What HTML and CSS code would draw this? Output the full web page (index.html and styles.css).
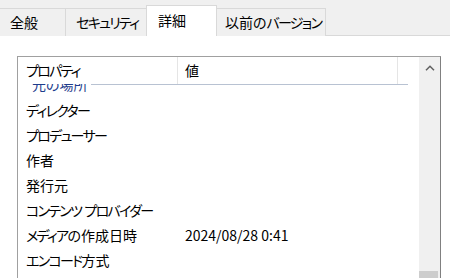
FILE: index.html
```html
<!DOCTYPE html>
<html lang="ja">
<head>
<meta charset="utf-8">
<link rel="stylesheet" href="styles.css">
</head>
<body>
<div class="tabstrip">
  <div class="tab t1">全般</div>
  <div class="tab t2"><span class="k">セキュリティ</span></div>
  <div class="tab t3 active">詳細</div>
  <div class="tab t4">以前の<span class="k">バージョン</span></div>
</div>
<div class="page">
  <div class="listbox">
    <div class="main">
      <div class="header">
        <div class="hcell c1"><span class="k">プロパティ</span></div>
        <div class="hcell c2">値</div>
        <div class="hcell c3"></div>
      </div>
      <div class="body">
        <div class="content">
          <div class="group"><span class="gtext">元の場所</span><span class="gline"></span></div>
          <div class="row"><div class="cell c1"><span class="k">ディレクター</span></div><div class="cell c2"></div></div>
          <div class="row"><div class="cell c1"><span class="k">プロデューサー</span></div><div class="cell c2"></div></div>
          <div class="row"><div class="cell c1">作者</div><div class="cell c2"></div></div>
          <div class="row"><div class="cell c1">発行元</div><div class="cell c2"></div></div>
          <div class="row"><div class="cell c1"><span class="k">コンテンツ</span>&nbsp;<span class="k">プロバイダー</span></div><div class="cell c2"></div></div>
          <div class="row"><div class="cell c1"><span class="k">メディア</span>の作成日時</div><div class="cell c2">2024/08/28 0:41</div></div>
          <div class="row"><div class="cell c1"><span class="k">エンコード</span>方式</div><div class="cell c2"></div></div>
        </div>
      </div>
    </div>
    <div class="scrollbar">
      <div class="sb-up">
        <svg width="10" height="6" viewBox="0 0 10 6"><path d="M1 5.2 L5 1.2 L9 5.2" fill="none" stroke="#606060" stroke-width="1.5"/></svg>
      </div>
      <div class="sb-track"></div>
      <div class="sb-thumb"></div>
    </div>
  </div>
</div>
</body>
</html>
```
FILE: styles.css
```css
html, body {
  margin: 0;
  padding: 0;
  background: #ffffff;
  overflow: hidden;
}
body {
  width: 450px;
  height: 278px;
  font-family: "Noto Sans CJK JP", "Noto Sans", sans-serif;
  font-size: 14px;
  font-feature-settings: "palt";
  color: #000;
}
.k {
  letter-spacing: -1.7px;
}
.tabstrip {
  height: 35px;
  background: #f0f0f0;
  border-bottom: 1px solid #d9d9d9;
  display: flex;
  align-items: flex-end;
}
.tab {
  box-sizing: border-box;
  height: 28px;
  margin-bottom: -1px;
  border: 1px solid #d9d9d9;
  border-bottom: none;
  margin-left: -1px;
  padding-left: 10px;
  line-height: 26px;
  background: #f0f0f0;
  white-space: nowrap;
}
.t1 { width: 67px; }
.t2 { width: 82px; }
.t3 { width: 71px; }
.t4 { width: 110px; padding-left: 8px; }
.tab.active {
  height: 31px;
  background: #ffffff;
  position: relative;
  z-index: 1;
  padding-left: 11px;
  line-height: 29px;
  margin-bottom: -1px;
}
.page {
  padding: 20px 0 0 17px;
}
.listbox {
  box-sizing: border-box;
  width: 424px;
  height: 260px;
  border: 1px solid #a0a0a0;
  border-right-color: #808080;
  display: flex;
}
.main {
  flex: 1;
  display: flex;
  flex-direction: column;
  min-width: 0;
}
.header {
  display: flex;
  height: 27px;
  background: #fff;
  position: relative;
  z-index: 2;
}
.hcell {
  box-sizing: border-box;
  line-height: 27px;
  white-space: nowrap;
}
.header .c1 { width: 160px; padding-left: 8px; border-right: 1px solid #e5e5e5; }
.header .c2 { width: 220px; padding-left: 7px; border-right: 1px solid #e5e5e5; }
.header .c3 { flex: 1; }
.body {
  flex: 1;
  overflow: hidden;
}
.content {
  margin-top: -13px;
}
.group {
  height: 26px;
  display: flex;
  align-items: center;
  padding-left: 14px;
  width: 390px;
  box-sizing: border-box;
}
.gtext {
  color: #1e3c8c;
  white-space: nowrap;
}
.gline {
  flex: 1;
  height: 1px;
  background: #b8c2d2;
  margin-left: 3px;
}
.row {
  display: flex;
  height: 25.1px;
  align-items: center;
  white-space: nowrap;
}
.cell { box-sizing: border-box; }
.row .c1 { width: 160px; padding-left: 8px; }
.row .c2 { padding-left: 7px; }
.scrollbar {
  width: 21px;
  background: #f0f0f0;
  display: flex;
  flex-direction: column;
}
.sb-up {
  height: 21px;
  display: flex;
  align-items: center;
  justify-content: center;
}
.sb-track {
  height: 193px;
}
.sb-thumb {
  height: 40px;
  margin-right: 2px;
  background: #cdcdcd;
}
```
